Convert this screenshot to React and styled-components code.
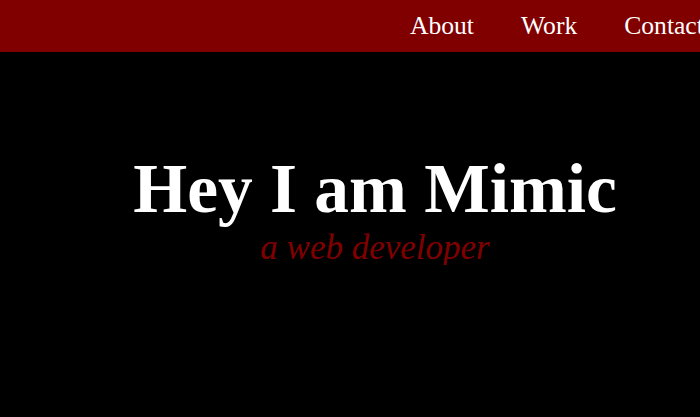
import React from 'react'
import styled, { createGlobalStyle } from "styled-components";

const GlobalStyle = createGlobalStyle`
    body {
      margin : 0;
      background : #000;
      font-family : "Liberation Serif", "Times New Roman", serif;
      overflow : hidden;
    }
`

function App() {
  return (
    <>
      <GlobalStyle />
      <Header>
        <NavList>
          <NavItem>About</NavItem>
          <NavItem>Work</NavItem>
          <NavItem>Contact</NavItem>
        </NavList>
      </Header>
      <Hero>
        <Title>Hey I am Mimic</Title>
        <Subtitle>a web developer</Subtitle>
      </Hero>
    </>
  )
}

export default App

const Header = styled.header`
    height : 52px;
    background-color : #800000;
    display : flex;
    overflow : hidden;
`

const NavList = styled.ul`
    display : flex;
    gap : 47px;
    list-style : none;
    margin : 0;
    padding : 0 0 0 410px;
    white-space : nowrap;
`

const NavItem = styled.li`
    color : #fff;
    font-size : 25.6px;
    line-height : 52px;
    cursor : pointer;
`

const Hero = styled.main`
    display : flex;
    flex-direction : column;
    align-items : center;
    padding : 102px 0 0 50px;
    color : #fff;
`

const Title = styled.h1`
    margin : 0;
    font-size : 69.4px;
    font-weight : bold;
    line-height : 1;
`

const Subtitle = styled.p`
    margin : 7px 0 0;
    font-size : 35px;
    font-style : italic;
    line-height : 1;
    color : #800000;
`
